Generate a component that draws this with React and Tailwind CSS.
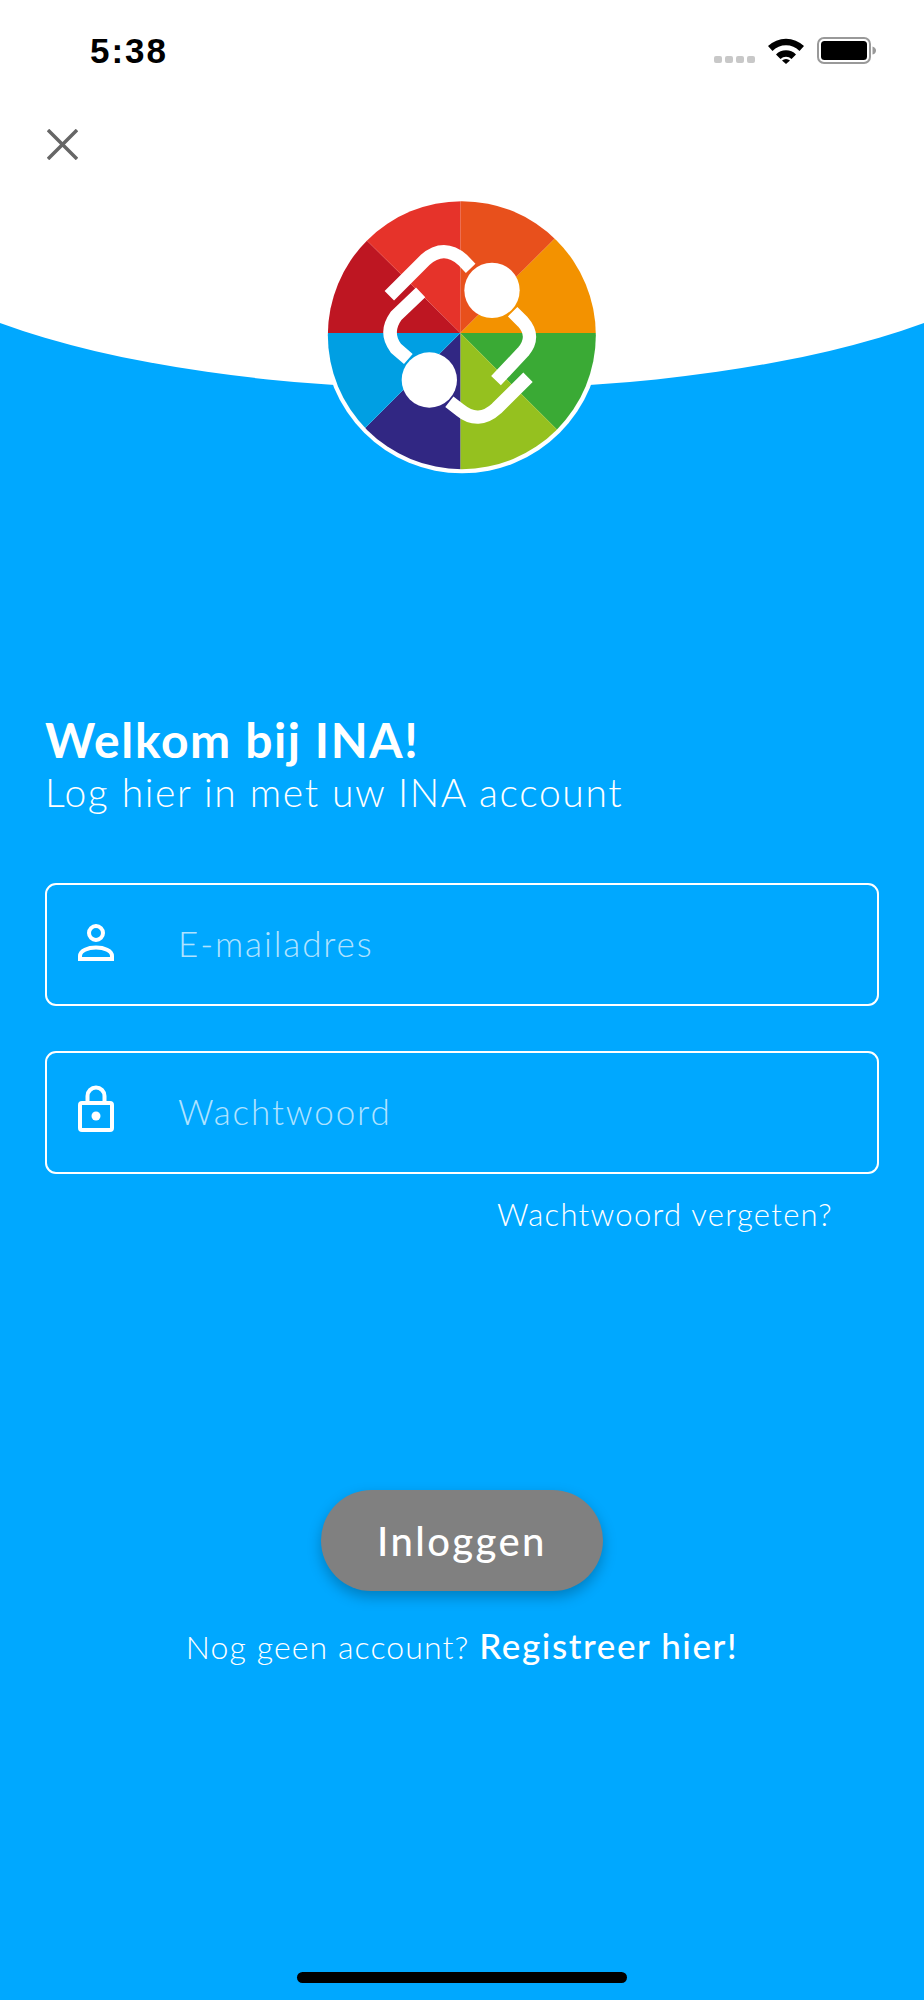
import React from 'react';

const WEDGES = [
  ['M451 459 L451 0 L900 0 L743 167 Z', '#E8501C'],
  ['M451 459 L743 167 L900 0 L900 459 Z', '#F39200'],
  ['M451 459 L900 459 L900 900 L743 751 Z', '#3AAA35'],
  ['M451 459 L743 751 L900 900 L451 900 Z', '#95C11F'],
  ['M451 459 L451 900 L0 900 L168 742 Z', '#312783'],
  ['M451 459 L168 742 L0 900 L0 459 Z', '#009FE3'],
  ['M451 459 L0 459 L0 0 L172 183 Z', '#BE1622'],
  ['M451 459 L172 183 L0 0 L451 0 Z', '#E6332A'],
];

function Logo() {
  return (
    <svg viewBox="0 0 900 900" className="absolute left-[310px] top-[180px] w-[300px] h-[300px]">
      <defs>
        <clipPath id="disc">
          <circle cx="455.5" cy="465.5" r="402" />
        </clipPath>
      </defs>
      <circle cx="456" cy="465" r="415" fill="#fff" />
      <g clipPath="url(#disc)">
        {WEDGES.map(([d, c]) => (
          <path key={c} d={d} fill={c} />
        ))}
      </g>
      <g fill="none" stroke="#fff" strokeWidth="40">
        <path d="M238 347 L345 240 Q402 190 458 240 L482 265" />
        <path d="M332 337 L258 408 Q222 458 258 505 L295 537" />
        <path d="M608 395 L638 425 Q678 470 640 515 L558 602" />
        <path d="M654 592 L560 685 Q505 735 450 690 L418 665" />
      </g>
      <circle cx="546" cy="331" r="83" fill="#fff" />
      <circle cx="358" cy="600" r="83" fill="#fff" />
    </svg>
  );
}

function StatusBar() {
  return (
    <div className="relative flex items-center justify-between h-[100px] pl-[90px] pr-[48px]">
      <span className="font-['Liberation_Sans',sans-serif] font-bold text-[35px] tracking-[2px] leading-none text-black">5:38</span>
      <div className="flex items-center">
        <div className="flex gap-[3px] mr-[13px] mt-[19px]">
          <div className="w-[8px] h-[7px] rounded-[2px] bg-[#c8c8c8]" />
          <div className="w-[8px] h-[7px] rounded-[2px] bg-[#c8c8c8]" />
          <div className="w-[8px] h-[7px] rounded-[2px] bg-[#c8c8c8]" />
          <div className="w-[8px] h-[7px] rounded-[2px] bg-[#c8c8c8]" />
        </div>
        <svg viewBox="0 0 36 27" className="w-[36px] h-[27px] mr-[13px]">
          <path d="M0 9 A26 26 0 0 1 36 9 L31.5 14 A19 19 0 0 0 4.5 14 Z" fill="#000" />
          <path d="M8 17.5 A14 14 0 0 1 28 17.5 L23.5 22 A8 8 0 0 0 12.5 22 Z" fill="#000" />
          <path d="M14 23.5 A6 6 0 0 1 22 23.5 L18 27 Z" fill="#000" />
        </svg>
        <svg viewBox="0 0 59 27" className="w-[59px] h-[27px]">
          <rect x="1" y="1" width="52" height="25" rx="6" fill="none" stroke="#999" strokeWidth="2" />
          <rect x="4" y="4" width="46" height="19" rx="3.5" fill="#000" />
          <path d="M55.5 9.5 C58 10 59 12 59 13.5 C59 15 58 17 55.5 17.5 Z" fill="#999" />
        </svg>
      </div>
    </div>
  );
}

function Field({ icon, placeholder, type }) {
  return (
    <div className="flex items-center h-[123px] border-2 border-white rounded-[11px] pl-[31px]">
      <div className="w-[36px] flex justify-center shrink-0">{icon}</div>
      <input
        type={type}
        placeholder={placeholder}
        className="ml-[64px] -mt-[2px] flex-1 bg-transparent outline-none text-[35px] tracking-[1.9px] font-light text-white placeholder:text-white/70"
      />
    </div>
  );
}

const PersonIcon = (
  <svg viewBox="0 0 36 37" className="w-[36px] h-[37px] -mt-[5px]" fill="none" stroke="#fff" strokeWidth="4">
    <circle cx="18" cy="9" r="7" />
    <path d="M2 35 V32 C2 26.5 10 23.5 18 23.5 S34 26.5 34 32 V35 Z" />
  </svg>
);

const LockIcon = (
  <svg viewBox="0 0 36 47" className="w-[36px] h-[47px] -mt-[9px]" fill="none" stroke="#fff" strokeWidth="4">
    <rect x="2" y="18" width="32" height="27" rx="2" strokeLinejoin="round" />
    <path d="M9.5 17 V11 a8.5 8.5 0 0 1 17 0 V17" />
    <circle cx="18" cy="31" r="4.5" fill="#fff" stroke="none" />
  </svg>
);

export default function App() {
  return (
    <div className="relative w-[924px] h-[2000px] overflow-hidden bg-[#00a8ff] font-['Lato',sans-serif] text-white">
      {/* white top with the curved edge */}
      <svg viewBox="0 0 924 460" className="absolute left-0 top-0 w-[924px] h-[460px]">
        <path d="M0 0 H924 V323 A600 183 0 0 1 0 323 Z" fill="#fff" />
      </svg>

      <StatusBar />

      <button className="relative block ml-[47px] mt-[29px] w-[31px] h-[31px]">
        <svg viewBox="0 0 31 31" className="w-[31px] h-[31px]" fill="none" stroke="#666" strokeWidth="3.5">
          <path d="M1 1 L30 30 M30 1 L1 30" />
        </svg>
      </button>

      <Logo />

      <div className="relative px-[45px] pt-[552px]">
        <h1 className="text-[48px] leading-[56px] tracking-[1.6px] font-bold">Welkom bij INA!</h1>
        <p className="text-[39px] leading-[48px] tracking-[1.66px] font-light">Log hier in met uw INA account</p>

        <div className="mt-[67px] flex flex-col gap-[45px]">
          <Field icon={PersonIcon} placeholder="E-mailadres" type="email" />
          <Field icon={LockIcon} placeholder="Wachtwoord" type="password" />
        </div>

        <div className="mt-[20px] pr-[46px] text-right text-[31px] leading-[40px] tracking-[1.3px] font-light">Wachtwoord vergeten?</div>

        <div className="mt-[256px] flex flex-col items-center">
          <button className="w-[282px] h-[101px] rounded-full bg-[#808080] text-[40px] tracking-[2.4px] font-medium shadow-[0_6px_14px_rgba(0,0,0,0.25)]">
            Inloggen
          </button>
          <div className="mt-[32px] text-[32px] leading-[44px] tracking-[1.1px] font-light">
            Nog geen account? <span className="text-[35px] tracking-[1.6px] font-medium">Registreer hier!</span>
          </div>
        </div>
      </div>

      {/* home indicator */}
      <div className="absolute left-[297px] bottom-[17px] w-[330px] h-[11px] rounded-full bg-black" />
    </div>
  );
}
